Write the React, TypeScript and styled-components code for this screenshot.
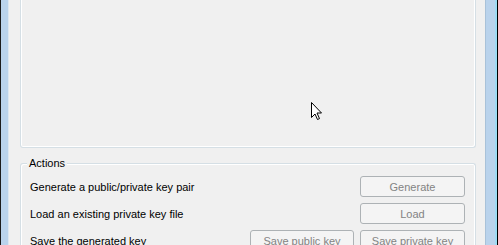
import styled, { createGlobalStyle } from 'styled-components'

const GlobalStyle = createGlobalStyle`
  html, body {
    margin: 0;
    padding: 0;
    background: #f0f0f0;
  }
  body {
    font-family: 'Liberation Sans', Arial, sans-serif;
    font-size: 11px;
    color: #000;
  }
`

const Frame = styled.div`
  position: relative;
  display: flex;
  width: 498px;
  height: 245px;
  overflow: hidden;
  background: #f0f0f0;
`
const Border = styled.div<{ $side: 'left' | 'right' }>`
  flex: none;
  box-sizing: border-box;
  width: ${(p) => (p.$side === 'left' ? '9px' : '13px')};
  background: #bad3ec;
  border-left: 1px solid ${(p) => (p.$side === 'left' ? '#1b1b1b' : '#a9c2d9')};
  border-right: ${(p) => (p.$side === 'left' ? '1px solid #dde7f1' : '1px solid #000')};
  box-shadow: ${(p) => (p.$side === 'right' ? 'inset -2px 0 0 #9edcf5' : 'none')};
`
const Content = styled.div`
  flex: 1;
  display: flex;
  flex-direction: column;
  padding: 0 9px 0 11px;
`
const KeyBox = styled.div`
  flex: none;
  height: 147px;
  border: 1px solid #d5dfe5;
  border-top: none;
  border-radius: 0 0 3px 3px;
  box-shadow: inset 1px 0 0 #fff, inset -1px -1px 0 #fff;
`
const Group = styled.div`
  position: relative;
  margin-top: 15px;
  flex: 1;
  border: 1px solid #d5dfe5;
  border-bottom: none;
  border-radius: 3px 3px 0 0;
  box-shadow: inset 1px 1px 0 #fff, inset -1px 0 0 #fff;
  padding: 12px 10px 0 9px;
  display: flex;
  flex-direction: column;
  gap: 6px;
`
const Legend = styled.span`
  position: absolute;
  top: -8px;
  left: 6px;
  padding: 0 2px;
  background: #f0f0f0;
  line-height: 14px;
`
const Row = styled.div`
  display: flex;
  align-items: center;
  height: 21px;
`
const Label = styled.span`
  flex: 1;
  line-height: 14px;
  white-space: nowrap;
`
const Buttons = styled.div`
  display: flex;
  gap: 6px;
`
const Button = styled.button<{ $wide?: number }>`
  width: ${(p) => p.$wide ?? 105}px;
  height: 21px;
  padding: 0;
  box-sizing: border-box;
  border: 1px solid #adb2b5;
  border-radius: 3px;
  background: #f4f4f4;
  color: #838383;
  font-family: inherit;
  font-size: 11px;
  line-height: 18px;
`
const Cursor = styled.svg`
  position: absolute;
  left: 310px;
  top: 101px;
`

export default function App() {
  return (
    <>
      <GlobalStyle />
      <Frame>
        <Border $side='left' />
        <Content>
          <KeyBox />
          <Group>
            <Legend>Actions</Legend>
            <Row>
              <Label>Generate a public/private key pair</Label>
              <Button disabled>Generate</Button>
            </Row>
            <Row>
              <Label>Load an existing private key file</Label>
              <Button disabled>Load</Button>
            </Row>
            <Row>
              <Label>Save the generated key</Label>
              <Buttons>
                <Button disabled $wide={104}>Save public key</Button>
                <Button disabled>Save private key</Button>
              </Buttons>
            </Row>
          </Group>
        </Content>
        <Border $side='right' />
        <Cursor width='13' height='20' viewBox='0 0 13 20'>
          <path
            d='M1.5 1.5 L1.5 16.5 L5 13 L7.5 18.5 L9.5 17.6 L7 12 L11.5 12 Z'
            fill='#fff'
            stroke='#000'
            strokeWidth='1'
          />
        </Cursor>
      </Frame>
    </>
  )
}
